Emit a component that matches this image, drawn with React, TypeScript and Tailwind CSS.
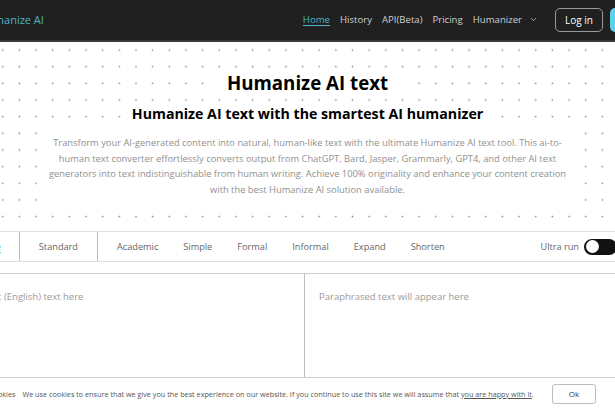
import { ChevronDown } from "lucide-react";

const tabs = ["Academic", "Simple", "Formal", "Informal", "Expand", "Shorten"];

const Header = () => (
  <header className="flex h-[42px] shrink-0 items-center border-b-2 border-[#3a3a3a] bg-[#202020]">
    <span className="-ml-[21px] shrink-0 text-[11px] text-[#4fb4c2]">Humanize AI</span>
    <nav className="-mr-[50px] ml-auto flex shrink-0 items-center text-[9.6px] text-[#cfcfcf]">
      <a className="text-[#4fb4c2] underline underline-offset-2">Home</a>
      <a className="ml-[10px]">History</a>
      <a className="ml-[10px]">API(Beta)</a>
      <a className="ml-[10px]">Pricing</a>
      <a className="ml-[10px] flex items-center gap-[7px]">
        Humanizer <ChevronDown size={9} strokeWidth={2} />
      </a>
      <button className="ml-[17px] h-[24px] w-[48px] rounded-[5px] border border-[#9a9a9a] text-[10px] text-white">
        Log in
      </button>
      <button className="ml-[7px] h-[24px] w-[55px] rounded-[5px] bg-[#5ad2e8] text-[10px] text-[#202020]">
        Sign up
      </button>
    </nav>
  </header>
);

const Hero = () => (
  <section className="flex h-[186px] shrink-0 flex-col items-center bg-white bg-[radial-gradient(circle,#8c8c8c_0.75px,transparent_1.1px)] bg-[size:16.67px_16.67px] bg-[position:-5.6px_-0.3px] text-center">
    <h1 className="mt-[27px] bg-white px-[18px] text-[18.7px] leading-[28px] font-bold text-black">
      Humanize AI text
    </h1>
    <h2 className="mt-[6px] bg-white px-[8px] text-[14.2px] leading-[22px] font-bold text-black">
      Humanize AI text with the smartest AI humanizer
    </h2>
    <p className="mt-[3px] w-[536px] bg-white px-[8px] pt-[7px] pb-[10px] text-[9.35px] leading-[15.7px] text-[#919191]">
      Transform your AI-generated content into natural, human-like text with the ultimate Humanize AI text tool. This
      ai-to-human text converter effortlessly converts output from ChatGPT, Bard, Jasper, Grammarly, GPT4, and other AI
      text generators into text indistinguishable from human writing. Achieve 100% originality and enhance your content
      creation with the best Humanize AI solution available.
    </p>
  </section>
);

const ModeBar = () => (
  <div className="mt-[3px] -ml-[36px] flex h-[31px] shrink-0 items-center border-y border-[#dedede] text-[9.2px] text-[#666]">
    <div className="flex h-full items-center border-r border-[#bdbdbd] px-[18px]">
      <span className="text-[#4fb4c2] underline underline-offset-2">Free</span>
    </div>
    <div className="flex h-full items-center border-r border-[#bdbdbd] px-[19px]">Standard</div>
    <div className="flex items-center gap-[25px] pl-[19px]">
      {tabs.map((t) => (
        <span key={t}>{t}</span>
      ))}
    </div>
    <div className="-mr-[2px] ml-auto flex items-center gap-[5px]">
      <span>Ultra run</span>
      <span className="relative h-[16px] w-[33px] rounded-full bg-[#111]">
        <span className="absolute top-[1.5px] left-[1.5px] h-[13px] w-[13px] rounded-full bg-white" />
      </span>
    </div>
  </div>
);

const Editors = () => (
  <div className="mt-[11px] -ml-[36px] grid h-[110px] w-[682px] shrink-0 grid-cols-2 border-t border-[#cfcfcf] text-[9.5px] text-[#9a9a9a]">
    <div className="border-r border-[#bdbdbd] px-[14px] pt-[16px]">Input (English) text here</div>
    <div className="px-[14px] pt-[16px]">Paraphrased text will appear here</div>
  </div>
);

const CookieBar = () => (
  <div className="absolute right-0 bottom-0 left-0 flex h-[33px] items-center border-t border-[#cfcfcf] bg-white text-[7.25px] text-[#555]">
    <span className="-ml-[11px]">Cookies</span>
    <span className="ml-[7px]">
      We use cookies to ensure that we give you the best experience on our website. If you continue to use this site we
      will assume that <span className="underline">you are happy with it</span>.
    </span>
    <button className="mr-[19px] ml-auto h-[20px] w-[44px] rounded-[3px] border border-[#bdbdbd] text-[8px] text-[#333]">
      Ok
    </button>
  </div>
);

export default function App() {
  return (
    <div className="relative flex h-[410px] w-[615px] flex-col overflow-hidden bg-white font-['Open_Sans',sans-serif]">
      <Header />
      <Hero />
      <ModeBar />
      <Editors />
      <CookieBar />
    </div>
  );
}
